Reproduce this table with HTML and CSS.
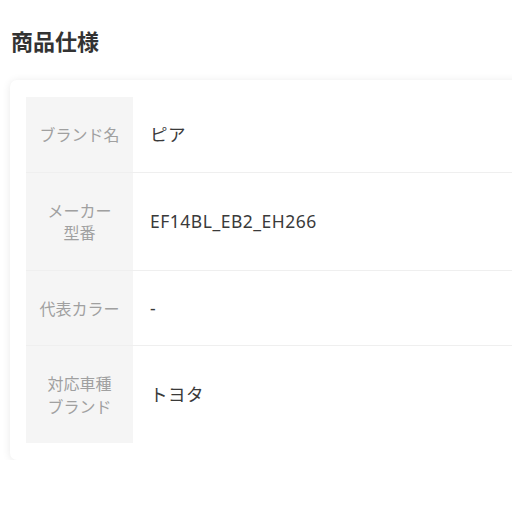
FILE: index.html
```html
<!DOCTYPE html>
<html lang="ja">
<head>
<meta charset="utf-8">
<link rel="stylesheet" href="styles.css">
</head>
<body>
<div class="page">
  <h2 class="title">商品仕様</h2>
  <div class="card">
    <div class="spec">
      <div class="row">
        <div class="label">ブランド名</div>
        <div class="value">ピア</div>
      </div>
      <div class="row">
        <div class="label">メーカー<br>型番</div>
        <div class="value">EF14BL_EB2_EH266</div>
      </div>
      <div class="row">
        <div class="label">代表カラー</div>
        <div class="value">-</div>
      </div>
      <div class="row last">
        <div class="label">対応車種<br>ブランド</div>
        <div class="value">トヨタ</div>
      </div>
    </div>
  </div>
</div>
</body>
</html>
```
FILE: styles.css
```css
html, body {
  margin: 0;
  padding: 0;
  background: #fff;
  overflow: hidden;
}
body {
  font-family: "Noto Sans CJK JP", "Noto Sans", sans-serif;
  color: #333;
}
.page {
  width: 620px;
  padding: 24px 0 0 10px;
}
.title {
  margin: 0 0 0 1px;
  font-size: 22px;
  line-height: 32px;
  font-weight: 700;
  color: #333;
}
.card {
  margin-top: 24px;
  background: #fff;
  border-radius: 7px;
  box-shadow: 0 1px 8px rgba(0, 0, 0, 0.09);
  padding: 17px 0 17px 16px;
}
.spec {
  display: flex;
  flex-direction: column;
}
.row {
  display: grid;
  grid-template-columns: 107px 1fr;
  border-bottom: 1px solid #efefef;
}
.row.last {
  border-bottom: none;
}
.label {
  background: #f5f5f5;
  color: #a0a0a0;
  font-size: 16px;
  line-height: 22.5px;
  text-align: center;
  padding: 26px 0;
  display: flex;
  align-items: center;
  justify-content: center;
}
.value {
  padding: 26px 0 26px 17px;
  font-family: "Noto Sans", "Noto Sans CJK JP", sans-serif;
  font-size: 17.5px;
  line-height: 22.5px;
  letter-spacing: 0.5px;
  display: flex;
  align-items: center;
  color: #3a3a3a;
}
```
